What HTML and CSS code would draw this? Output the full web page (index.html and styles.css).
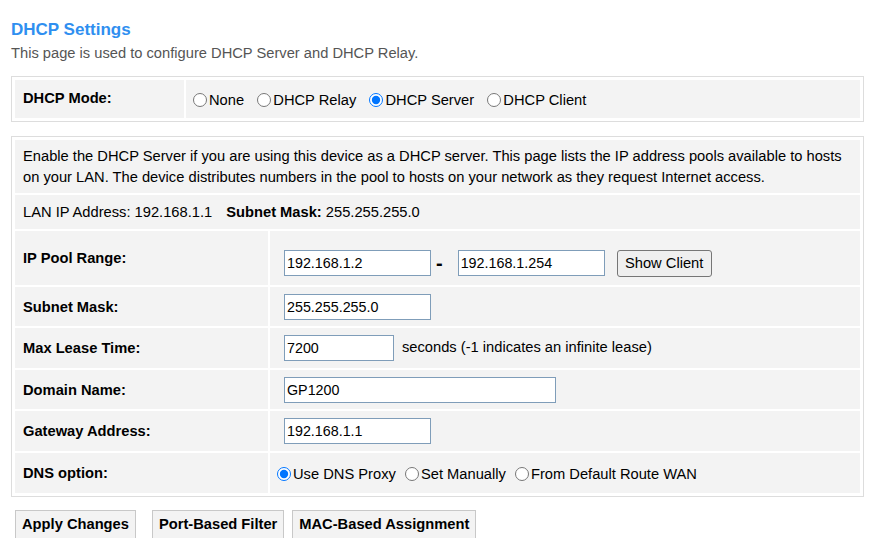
FILE: index.html
```html
<!DOCTYPE html>
<html lang="en">
<head>
  <meta charset="UTF-8">
  <title>DHCP Settings</title>
  <link rel="stylesheet" href="styles.css">
</head>
<body>
  <div class="page">
    <h2 class="title">DHCP Settings</h2>
    <p class="intro">This page is used to configure DHCP Server and DHCP Relay.</p>

    <div class="box">
      <table class="form">
        <tr class="row-mode">
          <th class="label label-narrow">DHCP Mode:</th>
          <td class="value"><label><input type="radio" name="mode">None</label>&nbsp;&nbsp;<label><input type="radio" name="mode">DHCP Relay</label>&nbsp;&nbsp;<label><input type="radio" name="mode" checked>DHCP Server</label>&nbsp;&nbsp;<label><input type="radio" name="mode">DHCP Client</label></td>
        </tr>
      </table>
    </div>

    <div class="box">
      <table class="form">
        <tr class="row-desc">
          <td colspan="2">Enable the DHCP Server if you are using this device as a DHCP server. This page lists the IP address pools available to hosts on your LAN. The device distributes numbers in the pool to hosts on your network as they request Internet access.</td>
        </tr>
        <tr class="row-lan">
          <td colspan="2">LAN IP Address: 192.168.1.1 <b class="mask">Subnet Mask:</b> 255.255.255.0</td>
        </tr>
        <tr class="row-pool">
          <th class="label">IP Pool Range:</th>
          <td class="value field pool">
            <input type="text" class="ip" value="192.168.1.2"><b class="dash">-</b><input type="text" class="ip" value="192.168.1.254"><button type="button" class="show-client">Show Client</button>
          </td>
        </tr>
        <tr class="row-39">
          <th class="label">Subnet Mask:</th>
          <td class="value field"><input type="text" class="ip" value="255.255.255.0"></td>
        </tr>
        <tr class="row-40">
          <th class="label">Max Lease Time:</th>
          <td class="value field"><input type="text" class="lease" value="7200"><span class="hint">seconds (-1 indicates an infinite lease)</span></td>
        </tr>
        <tr class="row-39">
          <th class="label">Domain Name:</th>
          <td class="value field"><input type="text" class="domain" value="GP1200"></td>
        </tr>
        <tr class="row-40">
          <th class="label">Gateway Address:</th>
          <td class="value field"><input type="text" class="ip" value="192.168.1.1"></td>
        </tr>
        <tr class="row-40">
          <th class="label">DNS option:</th>
          <td class="value"><label><input type="radio" name="dns" checked>Use DNS Proxy</label> <label><input type="radio" name="dns">Set Manually</label> <label><input type="radio" name="dns">From Default Route WAN</label></td>
        </tr>
      </table>
    </div>

    <div class="actions">
      <button type="button" class="action apply">Apply Changes</button>
      <button type="button" class="action port">Port-Based Filter</button>
      <button type="button" class="action">MAC-Based Assignment</button>
    </div>
  </div>
</body>
</html>
```

FILE: styles.css
```css
body {
  margin: 0;
  font-family: "Liberation Sans", Arial, sans-serif;
  font-size: 14.7px;
  color: #000;
  background: #fff;
}
.page {
  height: 538px;
  overflow: hidden;
  padding: 0 9px 0 11px;
}
.title {
  margin: 0;
  padding-top: 20px;
  font-size: 17px;
  line-height: 20px;
  color: #2f8ff0;
}
.intro {
  margin: 3px 0 0;
  line-height: 20px;
  color: #555;
}
.box {
  border: 1px solid #ddd;
  padding: 1px;
  margin-top: 13px;
}
.box + .box {
  margin-top: 14px;
}
.form {
  width: 100%;
  border-spacing: 2px;
}
.form th,
.form td {
  box-sizing: border-box;
  background: #f3f3f3;
  vertical-align: middle;
  text-align: left;
  padding: 0 8px;
}
.label {
  width: 253px;
  font-weight: bold;
}
.label-narrow {
  width: 169px;
  padding-bottom: 2px !important;
}
.value {
  padding-left: 2px !important;
}
.field {
  padding-left: 14px !important;
}
.row-mode td, .row-mode th { height: 38px; }
.row-desc td { height: 53px; line-height: 21px; }
.row-lan td { height: 34px; }
.row-pool td, .row-pool th { height: 54px; }
.row-39 td, .row-39 th { height: 39px; }
.row-40 td, .row-40 th { height: 40px; }
.pool {
  padding-top: 10px !important;
}
.mask {
  margin-left: 10px;
}
input[type="radio"] {
  width: 14px;
  height: 14px;
  margin: 3px 2px 0 5px;
  vertical-align: -2px;
}
input[type="text"] {
  box-sizing: border-box;
  height: 26px;
  padding: 0 2px;
  border: 1px solid #7f9db9;
  font-family: "Liberation Sans", Arial, sans-serif;
  font-size: 14.3px;
  color: #000;
  vertical-align: middle;
}
.ip {
  width: 147px;
}
.lease {
  width: 110px;
}
.domain {
  width: 272px;
}
.dash {
  font-size: 20px;
  margin: 0 15px 0 5px;
  vertical-align: middle;
}
.hint {
  margin-left: 8px;
}
.show-client {
  box-sizing: border-box;
  height: 27px;
  width: 95px;
  margin-left: 12px;
  padding: 0 4px;
  font-family: "Liberation Sans", Arial, sans-serif;
  font-size: 14.7px;
  color: #000;
  background: #efefef;
  border: 1px solid #767676;
  border-radius: 3px;
  vertical-align: middle;
}
.actions {
  display: flex;
  margin: 13px 0 0 4px;
}
.action {
  height: 40px;
  padding: 0 6px 12px;
  font-family: "Liberation Sans", Arial, sans-serif;
  font-size: 14.7px;
  font-weight: bold;
  color: #000;
  background: #f3f3f3;
  border: 1px solid #c8c8c8;
}
.apply {
  margin-right: 16px;
}
.port {
  margin-right: 8px;
}
```
